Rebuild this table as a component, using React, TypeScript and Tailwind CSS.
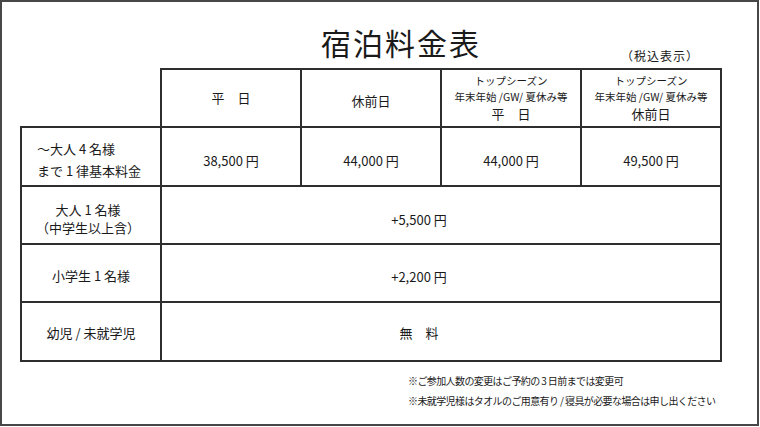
export default function App() {
  const line = "border-2 border-[#2e2e2e]";
  return (
    <div className="w-[760px] h-[427px] bg-white">
      <div className="w-[759px] h-[426px] border-2 border-[#474747] bg-white text-[#1a1a1a] font-['Noto_Sans_CJK_JP',sans-serif] flex flex-col">
        <div className="flex h-[41px] mt-[25px] pl-[319px]">
          <div className="self-start w-[162px] whitespace-nowrap text-[30px] leading-[30px] tracking-[2px]">宿泊料金表</div>
          <div className="self-end ml-[138px] mb-[5px] whitespace-nowrap text-[12px] leading-[14px] tracking-[1px]">（税込表示）</div>
        </div>
        <table className="border-collapse table-fixed ml-[18px] w-[702px]">
          <colgroup>
            <col className="w-[140px]" />
            <col className="w-[140px]" />
            <col className="w-[140px]" />
            <col className="w-[140px]" />
            <col className="w-[140px]" />
          </colgroup>
          <tbody>
            <tr className="h-[58px]">
              <td className="p-0"></td>
              <td className={`${line} p-0 text-center text-[13px] leading-[18px]`}>平　日</td>
              <td className={`${line} p-0 pt-[6px] text-center text-[13px] leading-[18px]`}>休前日</td>
              <td className={`${line} p-0 text-center`}>
                <div className="text-[10.5px] leading-[16px]">トップシーズン</div>
                <div className="text-[10.5px] leading-[16px]">年末年始 /GW/ 夏休み等</div>
                <div className="text-[13px] leading-[18px]">平　日</div>
              </td>
              <td className={`${line} p-0 text-center`}>
                <div className="text-[10.5px] leading-[16px]">トップシーズン</div>
                <div className="text-[10.5px] leading-[16px]">年末年始 /GW/ 夏休み等</div>
                <div className="text-[13px] leading-[18px]">休前日</div>
              </td>
            </tr>
            <tr className="h-[59px]">
              <td className={`${line} p-0 pt-[7px] pl-[15px] text-left text-[13px] leading-[22px]`}>
                <div>～大人 4 名様</div>
                <div>まで 1 律基本料金</div>
              </td>
              <td className={`${line} p-0 pt-[8px] text-center text-[13px] leading-[18px]`}>38,500 円</td>
              <td className={`${line} p-0 pt-[8px] text-center text-[13px] leading-[18px]`}>44,000 円</td>
              <td className={`${line} p-0 pt-[8px] text-center text-[13px] leading-[18px]`}>44,000 円</td>
              <td className={`${line} p-0 pt-[8px] text-center text-[13px] leading-[18px]`}>49,500 円</td>
            </tr>
            <tr className="h-[58px]">
              <td className={`${line} p-0 pt-[8px] pr-[6px] text-center text-[13px] leading-[18px]`}>
                <div>大人 1 名様</div>
                <div>（中学生以上含）</div>
              </td>
              <td colSpan={4} className={`${line} p-0 pt-[10px] pr-[44px] text-center text-[13px] leading-[18px]`}>+5,500 円</td>
            </tr>
            <tr className="h-[58px]">
              <td className={`${line} p-0 pt-[6px] text-center text-[13px] leading-[18px]`}>小学生 1 名様</td>
              <td colSpan={4} className={`${line} p-0 pt-[8px] pr-[44px] text-center text-[13px] leading-[18px]`}>+2,200 円</td>
            </tr>
            <tr className="h-[59px]">
              <td className={`${line} p-0 pt-[3px] text-center text-[13px] leading-[18px]`}>幼児 / 未就学児</td>
              <td colSpan={4} className={`${line} p-0 pt-[3px] pr-[44px] text-center text-[13px] leading-[18px]`}>無　料</td>
            </tr>
          </tbody>
        </table>
        <div className="mt-[9px] pl-[406px] text-[10px] leading-[20px] tracking-[-0.6px] whitespace-nowrap">
          <div>※ご参加人数の変更はご予約の 3 日前までは変更可</div>
          <div>※未就学児様はタオルのご用意有り / 寝具が必要な場合は申し出ください</div>
        </div>
      </div>
    </div>
  );
}
